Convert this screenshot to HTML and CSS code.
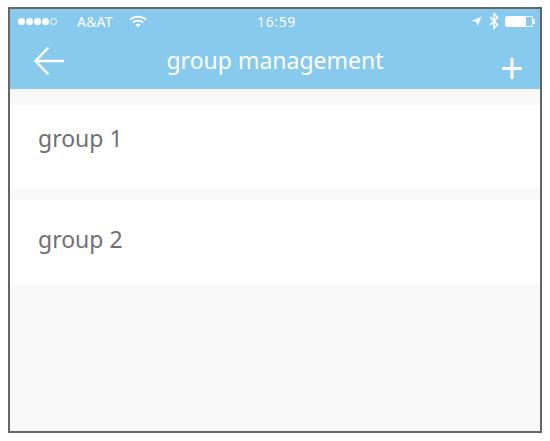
FILE: index.html
```html
<!DOCTYPE html>
<html>
<head>
    <meta charset="utf-8" />
    <title>group management</title>
    <link rel="stylesheet" href="styles.css">
</head>
<body>
    <div class="phone">
        <div class="header">
            <div class="status">
                <div class="status-left">
                    <span class="dots"><i></i><i></i><i></i><i></i><i class="off"></i></span>
                    <span class="carrier">A&amp;AT</span>
                    <svg class="wifi" width="18" height="13" viewBox="0 0 18 13"><path d="M1 4.6C5.5 .6 12.5 .6 17 4.6M3.8 7.4C6.8 4.9 11.2 4.9 14.2 7.4" fill="none" stroke="#fff" stroke-width="1.7"/><path d="M6.2 9.6C7.9 8.3 10.1 8.3 11.8 9.6L9 12.6Z" fill="#fff"/></svg>
                </div>
                <div class="time">16:59</div>
                <div class="status-right">
                    <svg class="loc" width="11" height="11" viewBox="0 0 11 11"><path d="M10.5 .5L.5 5L5.4 5.7L6.4 10.5Z" fill="#fff"/></svg>
                    <svg class="bt" width="10" height="18" viewBox="0 0 10 18"><path d="M1 5L8.6 12.6L5 16.4V1.6L8.6 5.4L1 13" fill="none" stroke="#fff" stroke-width="1.5"/></svg>
                    <div class="battery"><div class="battery-fill"></div></div>
                    <div class="battery-tip"></div>
                </div>
            </div>
            <div class="nav">
                <svg class="back" width="30" height="30" viewBox="0 0 30 30"><path d="M14.5 1.5L1.5 15L14.5 28.5M1.5 15H30" fill="none" stroke="#fff" stroke-width="2.4"/></svg>
                <div class="title">group management</div>
                <svg class="add" width="20" height="21" viewBox="0 0 20 21"><path d="M10 0V21M0 10.5H20" fill="none" stroke="#fff" stroke-width="3"/></svg>
            </div>
        </div>
        <div class="list">
            <div class="row">group 1</div>
            <div class="row second">group 2</div>
        </div>
    </div>
</body>
</html>
```

FILE: styles.css
```css
body {
    margin: 0;
    background: #fff;
    font-family: "Noto Sans", "Liberation Sans", sans-serif;
}

.phone {
    width: 530px;
    height: 422px;
    margin: 7px 0 0 8px;
    border: 2px solid #666;
    background: #f8f8f8;
}

.header {
    height: 80px;
    background: #88c9ee;
    color: #fff;
}

.status {
    display: grid;
    grid-template-columns: 1fr auto 1fr;
    align-items: center;
    height: 24px;
    padding: 0 5px 0 8px;
    font-size: 14px;
}

.status-left,
.status-right {
    display: flex;
    align-items: center;
}

.status-right {
    justify-content: flex-end;
}

.dots {
    display: flex;
    gap: 1px;
}

.dots i {
    width: 7px;
    height: 7px;
    border-radius: 50%;
    background: #fff;
}

.dots i.off {
    box-sizing: border-box;
    border: 1px solid #fff;
    background: none;
}

.carrier {
    margin-left: 20px;
    letter-spacing: .2px;
}

.wifi {
    margin-left: 16px;
}

.time {
    letter-spacing: .6px;
}

.loc {
    margin-right: 7px;
}

.bt {
    margin-right: 6px;
}

.battery {
    width: 28px;
    height: 11px;
    box-sizing: border-box;
    border: 1px solid #fff;
    border-radius: 2px;
}

.battery-fill {
    width: 20px;
    height: 100%;
    background: #fff;
}

.battery-tip {
    width: 2px;
    height: 5px;
    background: #fff;
    opacity: .7;
}

.nav {
    display: grid;
    grid-template-columns: 1fr auto 1fr;
    align-items: center;
    height: 56px;
    padding: 0 18px 0 24px;
}

.title {
    font-size: 23px;
    margin: -3px 6px 0 0;
}

.add {
    justify-self: end;
    margin-top: 14px;
}

.list {
    display: flex;
    flex-direction: column;
    gap: 12px;
    padding-top: 16px;
}

.row {
    height: 83px;
    box-sizing: border-box;
    padding: 17px 0 0 28px;
    background: #fff;
    color: #707070;
    font-size: 23px;
}

.second {
    height: 84px;
    padding-top: 23px;
}
```
